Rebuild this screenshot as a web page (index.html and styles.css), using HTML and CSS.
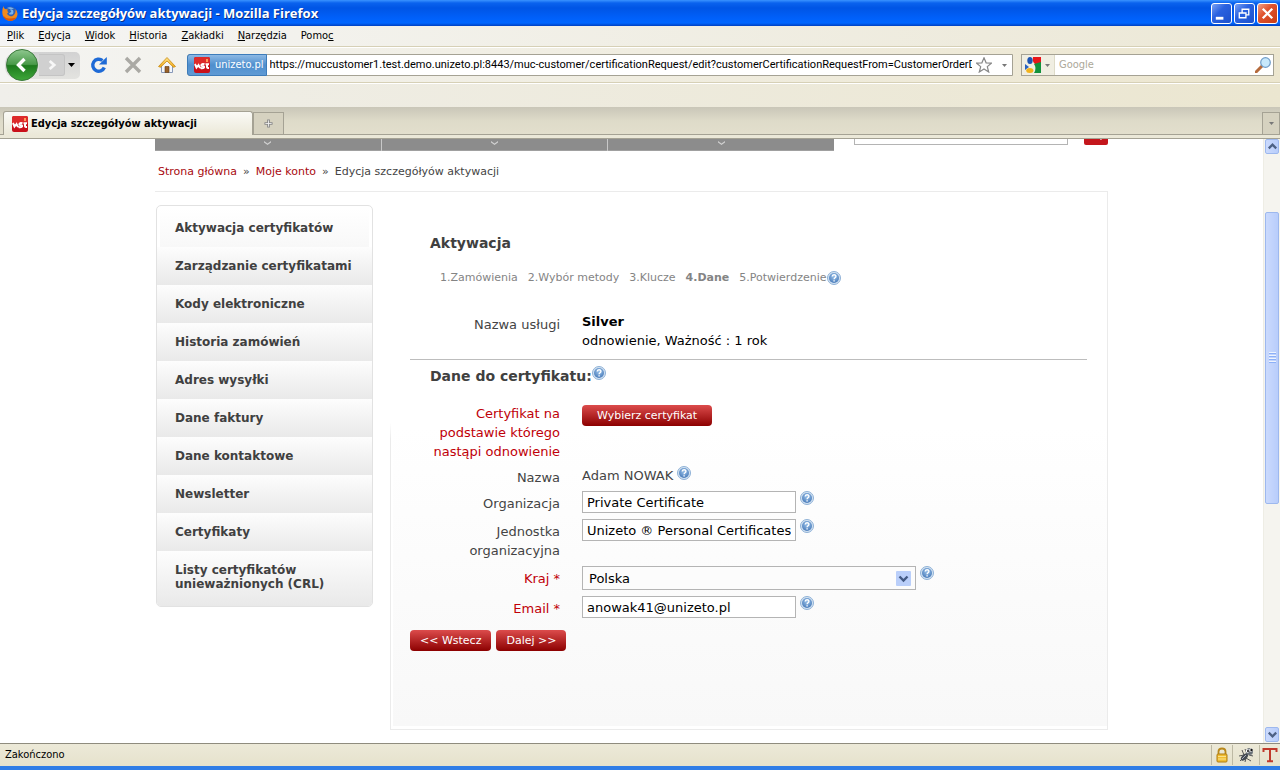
FILE: index.html
```html
<!DOCTYPE html>
<html lang="pl">
<head>
<meta charset="utf-8">
<title>Edycja szczegółyów aktywacji - Mozilla Firefox</title>
<link rel="stylesheet" href="styles.css">
</head>
<body>
<svg class="defs" aria-hidden="true">
  <defs>
    <radialGradient id="ball" cx="50%" cy="35%" r="65%"><stop offset="0" stop-color="#9cc3ea"/><stop offset="1" stop-color="#4a7cba"/></radialGradient>
    <linearGradient id="green" x1="0" y1="0" x2="0" y2="1"><stop offset="0" stop-color="#8fc88f"/><stop offset=".48" stop-color="#4a9a4a"/><stop offset=".52" stop-color="#1d7a1d"/><stop offset="1" stop-color="#3fa83a"/></linearGradient>
    <linearGradient id="roof" x1="0" y1="0" x2="0" y2="1"><stop offset="0" stop-color="#ffe58a"/><stop offset="1" stop-color="#f0a818"/></linearGradient>
    <symbol id="help" viewBox="0 0 14 14">
      <circle cx="7" cy="7" r="6.500" fill="#d4e3f2" stroke="#8fb1d6"/>
      <circle cx="7" cy="7" r="5" fill="url(#ball)"/>
      <path d="M5.200 5.600c0-2.400 3.700-2.400 3.700-.2 0 1.400-1.800 1.300-1.800 2.800M7.100 9.200v1.400" fill="none" stroke="#fff" stroke-width="1.400"/>
    </symbol>
    <symbol id="cert" viewBox="0 0 16 16">
      <rect width="16" height="16" rx="2" fill="#c9101a"/>
      <path d="M0 2q0-2 2-2h12q2 0 2 2v5H0z" fill="#dd2a2a"/>
      <path d="M1 7l1.500 3.500 2-2.500 1.500 3M10.500 7.300Q7.500 6.500 7.300 8.200 7.500 9.200 9 9.200q1.500.3 1 1.300-1 1-3.500.5M13 6.500V10q0 1 2 1M11.500 7.300h3.500" fill="none" stroke="#fff" stroke-width="2"/>
      <rect x="12" y="2" width="2" height="3" fill="#ff9a58"/>
    </symbol>
    <symbol id="down" viewBox="0 0 5 3"><path d="M0 0h5L2.500 3z" fill="currentColor"/></symbol>
  </defs>
</svg>

<header class="titlebar">
  <svg class="icon16" viewBox="0 0 16 16"><circle cx="8.500" cy="8" r="6.500" fill="#2f62b8"/><path d="M5 3q4-2 7 1-3-.5-4 1 2 1 1 2-2 1-2 2 2 1 4 0 1-2 0-4" fill="#7db4ea"/><path d="M1.500 1q0 2 1.500 3L6 4.500Q4.500 6 6.500 7.500 4.500 8 5.500 9.500q2 2.500 5 1.500Q14 9.500 13.500 4 17 8 14.500 12.500 11 17 6 15.500 0 13 .3 7 .5 3 1.500 1z" fill="#f08a1c"/><path d="M14.500 12.500Q11 17 6 15.500q-4-1.500-5-5 2 2.500 6 3 4 0 7.500-1z" fill="#d8560c"/></svg>
  <h1 class="titlebar-text">Edycja szczegółyów aktywacji - Mozilla Firefox</h1>
  <div class="window-buttons">
    <button class="win" aria-label="Minimalizuj"><svg viewBox="0 0 20 20"><path d="M4 15h8" stroke="#fff" stroke-width="3"/></svg></button>
    <button class="win" aria-label="Przywróć"><svg viewBox="0 0 20 20"><path d="M7.500 9V5.500h7v6H12M7 5.500h8M4.500 9.500h7v5h-7zM4 9.500h8" fill="none" stroke="#fff" stroke-width="1.400"/></svg></button>
    <button class="win win-close" aria-label="Zamknij"><svg viewBox="0 0 20 20"><path d="M5 5l10 10M15 5L5 15" stroke="#fff" stroke-width="2.400"/></svg></button>
  </div>
</header>

<nav class="menubar">
  <button><u>P</u>lik</button><button><u>E</u>dycja</button><button><u>W</u>idok</button><button><u>H</u>istoria</button><button><u>Z</u>akładki</button><button><u>N</u>arzędzia</button><button>Pomo<u>c</u></button>
</nav>

<div class="navbar">
  <div class="history">
    <button class="back" aria-label="Wstecz"><svg viewBox="0 0 34 34"><circle cx="17" cy="17" r="15.500" fill="url(#green)" stroke="#3c7a3c"/><path d="M19.500 11L13.500 17l6 6" fill="none" stroke="#fff" stroke-width="3.400"/></svg></button>
    <button class="forward" aria-label="Dalej"><svg viewBox="0 0 26 22"><path d="M11 6.500l5 4.500-5 4.500" fill="none" stroke="#f7f7f7" stroke-width="3"/></svg></button>
    <button class="recent" aria-label="Ostatnie strony"><svg viewBox="0 0 7 4"><path d="M0 0h7L3.500 4z"/></svg></button>
  </div>
  <button class="tool" aria-label="Odśwież"><svg viewBox="0 0 18 18"><path d="M14.300 11.500A6 6 0 1 1 12.500 4.500" fill="none" stroke="#1e6ad6" stroke-width="3.400"/><path d="M16.800 1v7.500H9z" fill="#1e6ad6"/></svg></button>
  <button class="tool" aria-label="Zatrzymaj"><svg viewBox="0 0 18 18"><path d="M2 2l14 14M16 2L2 16" stroke="#aaa9a4" stroke-width="3.400"/></svg></button>
  <button class="tool" aria-label="Strona startowa"><svg viewBox="0 0 18 18"><path d="M3.500 8.500L9 4l5.500 4.500v8h-11z" fill="#f3f6fb" stroke="#8899b8"/><path d="M7 10.500h4v6H7z" fill="#9a6228" stroke="#5e3a14" stroke-width=".6"/><path d="M.5 10.500L9 1.500l8.500 9-2 .8L9 5l-6.500 6.300z" fill="url(#roof)" stroke="#c88a10" stroke-width=".8"/></svg></button>
  <div class="urlbar">
    <button class="identity"><svg class="icon16"><use href="#cert"/></svg>unizeto.pl</button>
    <input class="url" aria-label="Adres" value="https://muccustomer1.test.demo.unizeto.pl:8443/muc-customer/certificationRequest/edit?customerCertificationRequestFrom=CustomerOrderDet">
    <svg class="icon16" viewBox="0 0 16 16"><path d="M8 .8l2.100 5 5.300.3-4.100 3.500 1.400 5.400L8 12l-4.700 3 1.400-5.400L.6 6.100l5.300-.3z" fill="#fff" stroke="#888" stroke-width="1.200"/></svg>
    <button class="arrow" aria-label="Historia adresów"><svg><use href="#down"/></svg></button>
  </div>
  <div class="searchbar">
    <button class="engine" aria-label="Wyszukiwarka Google"><svg class="icon16" viewBox="0 0 16 16"><path d="M8 0h8v7H10q-3-2-2-7z" fill="#e8161a"/><path d="M9 7l7-2v11H9q3-5 0-9z" fill="#12923c"/><path d="M0 7l4 3-4 3z" fill="#2a62c0"/><ellipse cx="5" cy="3.500" rx="2.700" ry="3.500" fill="#1c54b4"/><ellipse cx="4.800" cy="13.500" rx="3.600" ry="2.500" fill="#f2b21a"/></svg><svg class="mini"><use href="#down"/></svg></button>
    <input aria-label="Szukaj w Google" placeholder="Google">
    <button class="lens" aria-label="Szukaj"><svg class="icon16" viewBox="0 0 16 16"><path d="M1 15l6-6" stroke="#b56a3c" stroke-width="3" stroke-linecap="round"/><circle cx="10.500" cy="5.500" r="4.800" fill="#c7e8fb" stroke="#6f9cc8" stroke-width="1.200"/></svg></button>
  </div>
</div>

<div class="bookmarks"></div>
<div class="tabstrip">
  <button class="tab"><svg class="icon16"><use href="#cert"/></svg>Edycja szczegółyów aktywacji</button>
  <button class="newtab" aria-label="Nowa karta"><svg viewBox="0 0 10 10"><path d="M5 .5v9M.5 5h9" stroke="#888" stroke-width="3"/><path d="M5 1.500v7M1.500 5h7" stroke="#eee"/></svg></button>
  <button class="alltabs" aria-label="Lista kart"><svg><use href="#down"/></svg></button>
</div>

<div class="viewport">
  <div class="scroller">
    <div class="page">
      <div class="top">
        <nav class="topnav" aria-label="Menu główne">
          <button aria-label="Sklep"><svg viewBox="0 0 7 4"><path d="M0 0l3.500 2.500L7 0v1.500L3.500 4 0 1.500z"/></svg></button>
          <button aria-label="Oferta"><svg viewBox="0 0 7 4"><path d="M0 0l3.500 2.500L7 0v1.500L3.500 4 0 1.500z"/></svg></button>
          <button aria-label="Pomoc"><svg viewBox="0 0 7 4"><path d="M0 0l3.500 2.500L7 0v1.500L3.500 4 0 1.500z"/></svg></button>
        </nav>
        <input class="site-search" aria-label="Szukaj w serwisie">
        <button class="site-go" aria-label="Szukaj w serwisie"><svg viewBox="0 0 24 22"><circle cx="11" cy="9" r="4" fill="none" stroke="#fff" stroke-width="2"/><path d="M14 12l4 4" stroke="#fff" stroke-width="3"/></svg></button>
      </div>
      <nav class="crumbs"><a href="#">Strona główna</a><span>»</span><a href="#">Moje konto</a><span>»</span><span>Edycja szczegółyów aktywacji</span></nav>
      <div class="frame">
        <nav class="side">
          <a href="#">Aktywacja certyfikatów</a>
          <a href="#">Zarządzanie certyfikatami</a>
          <a href="#">Kody elektroniczne</a>
          <a href="#">Historia zamówień</a>
          <a href="#">Adres wysyłki</a>
          <a href="#">Dane faktury</a>
          <a href="#">Dane kontaktowe</a>
          <a href="#">Newsletter</a>
          <a href="#">Certyfikaty</a>
          <a href="#">Listy certyfikatów unieważnionych (CRL)</a>
        </nav>
        <main class="panel">
          <h2>Aktywacja</h2>
          <ol class="steps">
            <li>1.Zamówienia</li><li>2.Wybór metody</li><li>3.Klucze</li><li class="current">4.Dane</li><li>5.Potwierdzenie<svg class="help"><use href="#help"/></svg></li>
          </ol>
          <div class="row service">
            <span class="label">Nazwa usługi</span>
            <div class="value"><b>Silver</b><br>odnowienie, Ważność : 1 rok</div>
          </div>
          <h2 class="section">Dane do certyfikatu:<svg class="help"><use href="#help"/></svg></h2>
          <form class="form">
            <div class="row">
              <label class="label required" for="pick">Certyfikat na podstawie którego nastąpi odnowienie</label>
              <button type="button" id="pick" class="btn pick">Wybierz certyfikat</button>
            </div>
            <div class="row static">
              <span class="label">Nazwa</span>
              <div class="field">Adam NOWAK<svg class="help"><use href="#help"/></svg></div>
            </div>
            <div class="row">
              <label class="label" for="org">Organizacja</label>
              <div class="field"><input id="org" value="Private Certificate"><svg class="help"><use href="#help"/></svg></div>
            </div>
            <div class="row">
              <label class="label" for="unit">Jednostka organizacyjna</label>
              <div class="field"><input id="unit" value="Unizeto ® Personal Certificates"><svg class="help"><use href="#help"/></svg></div>
            </div>
            <div class="row">
              <label class="label required" for="country">Kraj *</label>
              <div class="field"><div class="select"><select id="country"><option>Polska</option></select><svg viewBox="0 0 15 15"><rect width="15" height="15" rx="1" fill="#bacffa"/><path d="M3.500 5.500l4 4 4-4" fill="none" stroke="#435a84" stroke-width="2.400"/></svg></div><svg class="help"><use href="#help"/></svg></div>
            </div>
            <div class="row">
              <label class="label required" for="email">Email *</label>
              <div class="field"><input id="email" value="anowak41@unizeto.pl"><svg class="help"><use href="#help"/></svg></div>
            </div>
            <div class="actions">
              <button type="button" class="btn">&lt;&lt; Wstecz</button>
              <button type="button" class="btn">Dalej &gt;&gt;</button>
            </div>
          </form>
        </main>
      </div>
    </div>
  </div>
  <div class="scrollbar">
    <button aria-label="W górę"><svg viewBox="0 0 14 14"><path d="M3 9l4-4 4 4" fill="none" stroke="#4d6185" stroke-width="2.400"/></svg></button>
    <div class="before"></div>
    <div class="thumb"><i></i><i></i><i></i><i></i></div>
    <div class="after"></div>
    <button aria-label="W dół"><svg viewBox="0 0 14 14"><path d="M3 5l4 4 4-4" fill="none" stroke="#4d6185" stroke-width="2.400"/></svg></button>
  </div>
</div>

<footer class="status">
  <span class="status-text">Zakończono</span>
  <span class="cell"><svg class="icon16" viewBox="0 0 16 16"><path d="M4.500 8V4.500q0-3 3.500-3t3.500 3V8" fill="none" stroke="#b8881c" stroke-width="1.800"/><rect x="3" y="7" width="10" height="8" rx="1" fill="#f0bd32" stroke="#b07c10"/><path d="M4 9.500h8M4 12h8" stroke="#fbe28c"/></svg></span>
  <span class="cell wide"><svg class="icon16" viewBox="0 0 16 16"><path d="M4 3l2 5-5 1M7 2l2 5M2 14l4-4M7 15l1-4 5 3M15 9l-4-1" fill="none" stroke="#555"/><ellipse cx="6.500" cy="10" rx="4.500" ry="2.400" transform="rotate(-45 6.500 10)" fill="#444b52"/><path d="M4 12l4-4" stroke="#aab"/><circle cx="11.500" cy="4.500" r="3.500" fill="#6a7178"/><circle cx="9.500" cy="4" r="1.800" fill="#fff"/><circle cx="13" cy="3" r="1.800" fill="#fff"/><circle cx="10" cy="4" r="1" fill="#111"/><circle cx="13.500" cy="3" r="1.200" fill="#111"/></svg></span>
  <span class="cell"><svg class="icon16" viewBox="0 0 16 16"><path d="M1.500 5V2h13v3M8 2v12M5 14.300h6" fill="none" stroke="#c0392b" stroke-width="2"/></svg></span>
</footer>
</body>
</html>
```
FILE: styles.css
```css
* { box-sizing: border-box; }

body {
  margin: 0;
  height: 100vh;
  display: flex;
  flex-direction: column;
  overflow: hidden;
  background: #fff;
  font: 11px/14px "DejaVu Sans Condensed", "DejaVu Sans", sans-serif;
  color: #000;
}

button, input, select { font: inherit; color: inherit; margin: 0; }
button { padding: 0; border: 0; background: none; }
input { min-width: 0; outline: 0; }
svg { display: block; flex: none; }
.defs { position: absolute; width: 0; height: 0; }
.icon16 { width: 16px; height: 16px; }

/* Window frame */
.titlebar {
  flex: none;
  display: flex;
  align-items: center;
  gap: 4px;
  height: 26px;
  padding: 0 2px;
  background: linear-gradient(#3a93ff 0, #0a62ee 3px, #0055e5 8px, #0060fa 18px, #0066ff 23px, #0040c0 26px);
}
.titlebar-text {
  flex: 1;
  margin: 0;
  font: bold 13px/18px "Open Sans", sans-serif;
  color: #fff;
  text-shadow: 1px 1px 0 #0a2f86;
}
.window-buttons { display: flex; gap: 2px; }
.win {
  width: 21px;
  height: 21px;
  border: 1px solid #fff;
  border-radius: 3px;
  background: linear-gradient(135deg, #7ba2f4, #2a62e0 40%, #1c50cc);
}
.win-close { background: linear-gradient(135deg, #f0a088, #e0532e 40%, #c83c14); }

.menubar {
  flex: none;
  display: flex;
  gap: 14px;
  height: 21px;
  padding: 0 7px;
  background: linear-gradient(90deg, #f5f5f4, #ece8d6);
  border-bottom: 1px solid #d6d0b6;
}

.navbar {
  flex: none;
  display: flex;
  align-items: center;
  height: 36px;
  padding: 0 6px 0 5px;
  background: linear-gradient(90deg, #f4f4f2, #ece6cf);
  border-top: 1px solid #fff;
  border-bottom: 1px solid #d6d0b6;
}
.history {
  display: flex;
  align-items: center;
  height: 27px;
  width: 75px;
  margin-right: 2px;
  border-radius: 12px 5px 5px 12px;
  background: linear-gradient(#d2d2d2, #e3e3e0);
}
.back svg { width: 34px; height: 34px; }
.forward {
  height: 22px;
  border: 1px solid #c4c4c4;
  border-left: 0;
  border-radius: 0 3px 3px 0;
  background: #d0d0d0;
}
.forward svg { width: 25px; height: 20px; }
.recent { margin-left: 3px; }
.recent svg { width: 7px; height: 4px; }
.tool { width: 34px; display: flex; justify-content: center; }
.tool svg { width: 18px; height: 18px; }

.urlbar, .searchbar {
  display: flex;
  align-items: center;
  height: 22px;
  border: 1px solid #a5a294;
  background: #fff;
}
.urlbar { flex: 1; margin-left: 3px; border-radius: 3px 0 0 3px; }
.identity {
  display: flex;
  align-items: center;
  gap: 5px;
  height: 22px;
  margin: -1px 3px -1px -1px;
  padding: 0 2px 0 6px;
  color: #fff;
  border: 1px solid #3d7cba;
  border-radius: 3px 0 0 3px;
  background: linear-gradient(#8db9e4, #4f8fce 50%, #5f9ad4);
}
.url { flex: 1; padding: 0; border: 0; background: none; margin-right: 4px; font-family: Roboto, sans-serif; }
.arrow { width: 16px; display: grid; place-items: center; margin-left: 4px; color: #777; }
.arrow svg, .mini, .alltabs svg { width: 5px; height: 3px; }
.searchbar { width: 253px; margin-left: 8px; }
.searchbar input { flex: 1; padding: 0 4px; border: 0; }
.searchbar input::placeholder { color: #aca899; opacity: 1; }
.engine {
  display: flex;
  align-items: center;
  gap: 4px;
  height: 20px;
  width: 33px;
  padding-left: 3px;
  color: #777;
  background: #f0eee2;
  border-right: 1px solid #dedbc8;
}
.lens { padding-right: 2px; }

.bookmarks {
  flex: none;
  height: 24px;
  border-top: 1px solid #fff;
  background: linear-gradient(90deg, #f0efea, #ebe6d0);
}

.tabstrip {
  flex: none;
  display: flex;
  align-items: flex-end;
  height: 31px;
  padding-left: 3px;
  background: linear-gradient(#c9c6b8, #dedbc9 14px, #e3dfcd);
  border-bottom: 3px solid #ebe8d8;
  box-shadow: 0 1px 0 #a5a294, inset 0 -1px 0 #a5a294;
  position: relative;
}
.tab, .newtab, .alltabs {
  height: 23px;
  border: 1px solid #a5a294;
  border-bottom: 0;
}
.tab {
  width: 250px;
  display: flex;
  align-items: center;
  gap: 3px;
  padding: 0 8px;
  height: 24px;
  font-weight: bold;
  border-radius: 3px 3px 0 0;
  background: linear-gradient(#fafaf6, #ebe8d8);
}
.newtab, .alltabs { display: grid; place-items: center; background: #d6d2c0; border-bottom: 1px solid #a5a294; }
.newtab { width: 31px; }
.newtab svg { width: 9px; height: 9px; }
.alltabs { width: 18px; margin-left: auto; color: #777; }

/* Page area */
.viewport { flex: 1; min-height: 0; display: flex; }
.scroller { flex: 1; overflow: hidden; font-family: "DejaVu Sans", sans-serif; }
.page { max-width: 953px; margin: 0 auto; }
.top { display: flex; height: 13px; }
.topnav { flex: 1; display: flex; gap: 1px; background: #c8c8c8; }
.topnav button {
  flex: 1;
  display: flex;
  justify-content: center;
  padding-top: 3px;
  background: #8c8c8c;
  border-bottom: 1px solid #a0a0a0;
}
.topnav svg { width: 7px; height: 4px; fill: #d0d0d0; }
.site-search {
  width: 214px;
  height: 22px;
  margin: -15px 16px 0 20px;
  border: 1px solid #b4b4b4;
}
.site-go {
  width: 24px;
  height: 22px;
  margin-top: -15px;
  border-radius: 2px;
  background: #c4161c;
}
.crumbs { display: flex; gap: 6px; padding: 14px 0 0 3px; height: 40px; color: #444; }
.crumbs a { color: #a80a10; text-decoration: none; }

.frame {
  display: grid;
  grid-template-columns: 218px 1fr;
  column-gap: 17px;
  border: solid #ebebeb;
  border-width: 1px 1px 0 0;
}
.side {
  align-self: start;
  margin: 13px 0 0 1px;
  padding-top: 3px;
  border: 1px solid #e2e2e2;
  border-radius: 5px;
  overflow: hidden;
}
.side a {
  display: block;
  min-height: 38px;
  padding: 12px 10px 12px 18px;
  font-size: 12px;
  font-weight: bold;
  color: #404040;
  text-decoration: none;
  background: linear-gradient(#fdfdfd, #e9e9e9);
}
.side a:first-child { margin: 0 3px; padding-left: 15px; background: linear-gradient(#fff, #f8f8f8); }
.side a:last-child { padding-bottom: 15px; }

.panel {
  padding: 39px 20px 78px 19px;
  border: solid #ebebeb;
  border-width: 0 0 1px 1px;
  border-image: linear-gradient(transparent 43%, #ebebeb 46%) 1;
  background: linear-gradient(#fff 44%, #f8f8f8) no-repeat 2px 0 / 100% calc(100% - 3px);
  font-size: 13px;
  line-height: 19px;
  color: #444;
}
.panel h2 { margin: 0; padding: 2px 0 0 20px; font-size: 14px; line-height: 20px; color: #404040; }
.steps {
  display: flex;
  gap: 10px;
  margin: 16px 0 0 30px;
  padding: 0;
  list-style: none;
  font-size: 11px;
  line-height: 18px;
  color: #848484;
}
.steps li { display: flex; align-items: center; }
.steps .current { font-weight: bold; }
.help { width: 14px; height: 14px; }

.row { display: grid; grid-template-columns: 150px 1fr; column-gap: 22px; align-items: start; }
.label { padding-top: 3px; text-align: right; }
.required { color: #c00008; }
.value { color: #000; }
.service { margin-top: 25px; padding-bottom: 9px; border-bottom: 1px solid #bdbdbd; }
.panel .section { display: flex; padding-top: 6px; }

.form { display: grid; row-gap: 6px; margin-top: 15px; }
.static { margin: -1px 0 -2px; }
.static .label { padding-top: 2px; }
.field { display: flex; gap: 4px; color: #444; }
.field input, .select select {
  height: 22px;
  width: 214px;
  padding: 0 4px;
  border: 1px solid #b4b4b4;
  background: #fff;
  color: #000;
}
.select { display: grid; align-items: center; }
.select select, .select svg { grid-area: 1 / 1; }
.select select { width: 334px; height: 24px; padding: 0 6px; appearance: none; border-radius: 0; background: #fcfcfc; }
.select svg { width: 15px; height: 15px; justify-self: end; margin-right: 5px; pointer-events: none; }

.btn {
  height: 21px;
  padding: 0 10px;
  border-radius: 4px;
  background: linear-gradient(#dc4c4c, #8c0000);
  color: #fff;
  font-size: 11px;
  white-space: nowrap;
}
.pick { justify-self: start; margin-top: 4px; padding: 0 15px; }
.actions { display: flex; gap: 5px; margin-top: 6px; }

.scrollbar {
  width: 17px;
  display: flex;
  flex-direction: column;
  padding: 1px;
  background: #f5f4ef;
  border-left: 1px solid #eeede5;
}
.scrollbar button, .thumb {
  border: 1px solid #9db8ee;
  border-radius: 2px;
  background: linear-gradient(90deg, #cbdafd, #b8cdfb);
}
.scrollbar button svg { width: 13px; height: 13px; }
.before { flex: 58; }
.after { flex: 224; }
.thumb { flex: 292; display: flex; flex-direction: column; justify-content: center; gap: 1px; align-items: center; }
.thumb i { width: 7px; height: 2px; border-bottom: 1px solid #8cb0f8; background: #eef4fe; }

.status {
  flex: none;
  display: flex;
  align-items: center;
  height: 27px;
  background: linear-gradient(#ece9d8, #e6e2cc);
  border-top: 1px solid #8f8c7e;
  border-bottom: 4px solid #2f7de6;
}
.status-text { flex: 1; padding-left: 5px; }
.cell { padding: 2px; border-left: 1px solid #bdb9a4; }
.wide { padding: 2px 5px; }
```
